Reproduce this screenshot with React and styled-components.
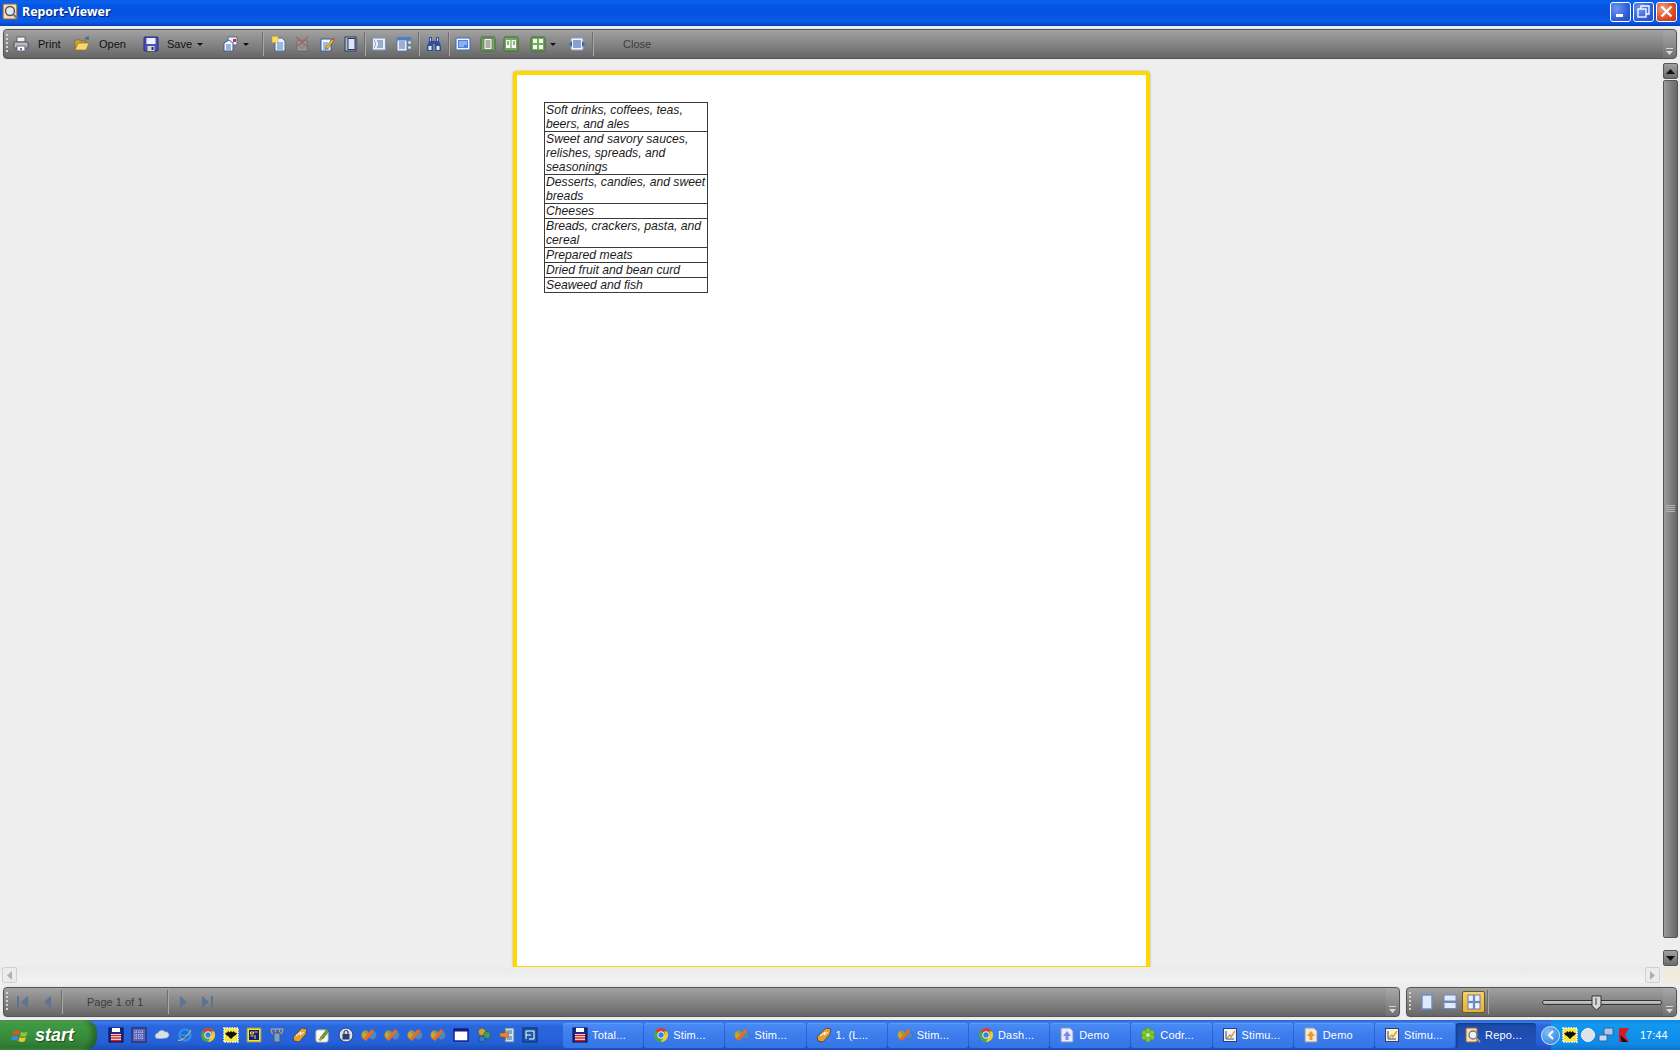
import React from 'react';
import styled, { createGlobalStyle } from 'styled-components';

const Global = createGlobalStyle`
  html, body { margin: 0; padding: 0; background: #eeeeee; overflow: hidden; }
  * { box-sizing: border-box; }
`;

const Screen = styled.div`
  width: 1680px;
  height: 1050px;
  display: flex;
  flex-direction: column;
  font-family: "Liberation Sans", Arial, sans-serif;
  background: #eeeeee;
  overflow: hidden;
`;

const TitleBar = styled.div`
  height: 26px;
  flex: none;
  display: flex;
  align-items: center;
  padding: 0 3px 2px 2px;
  background: linear-gradient(180deg, #0a5be0 0%, #0a62f0 8%, #0458e6 20%, #0550dc 55%, #0a5cec 85%, #0347c9 100%);
  border-bottom: 1px solid #0a3fb0;
`;

const TitleText = styled.span`
  margin-left: 3px;
  color: #fff;
  font: bold 12.4px "Noto Sans", "Liberation Sans", sans-serif;
  text-shadow: 1px 1px 0 #06246e;
`;

const WinButtons = styled.div`
  margin-left: auto;
  display: flex;
  gap: 2px;
`;

const WinButton = styled.div`
  width: 21px;
  height: 20px;
  border: 1px solid #fff;
  border-radius: 3px;
  display: flex;
  align-items: center;
  justify-content: center;
  background: ${p => p.$close
    ? 'radial-gradient(circle at 30% 30%, #f0a080, #dc4a20 60%, #c03410)'
    : 'radial-gradient(circle at 30% 30%, #6f97ee, #2f5fdc 60%, #2048bb)'};
`;

const Toolbar = styled.div`
  height: 30px;
  flex: ${p => p.$grow ? '1' : 'none'};
  width: ${p => p.$w ? p.$w + 'px' : 'auto'};
  display: flex;
  align-items: center;
  border: 1px solid #555;
  border-radius: 4px;
  background: linear-gradient(180deg, #a2a2a2 0%, #939393 25%, #7c7c7c 65%, #656565 100%);
  box-shadow: 0 0 1px #aaa;
  font-size: 11px;
  color: #111;
  overflow: hidden;
`;

const TopRow = styled.div`
  flex: none;
  padding: 3px 3px 4px 3px;
`;

const Grip = styled.div`
  width: 2px;
  height: 20px;
  margin: 0 ${p => p.$after}px 0 2px;
  flex: none;
  background: repeating-linear-gradient(180deg, #d5d5c5 0 2px, transparent 2px 4px);
`;

const Slot = styled.div`
  width: ${p => p.$w}px;
  margin-left: ${p => p.$ml || 0}px;
  height: 100%;
  flex: none;
  display: flex;
  align-items: center;
  justify-content: ${p => p.$start ? 'flex-start' : 'center'};
  gap: ${p => p.$gap || 0}px;
`;

const Sep = styled.div`
  width: 1px;
  height: 24px;
  flex: none;
  margin-left: ${p => p.$ml || 0}px;
  background: #a8a8a8;
  box-shadow: -1px 0 0 #6e6e6e;
`;

const Caret = styled.span`
  width: 0;
  height: 0;
  flex: none;
  margin-left: ${p => p.$ml || 0}px;
  border-left: 3px solid transparent;
  border-right: 3px solid transparent;
  border-top: 3px solid #111;
`;

const Dim = styled.span`
  color: #3c3c3c;
  margin-left: ${p => p.$ml || 0}px;
  white-space: nowrap;
`;

const EndCap = styled.div`
  margin-left: auto;
  width: 13px;
  height: 100%;
  flex: none;
  display: flex;
  align-items: flex-end;
  justify-content: center;
  padding-bottom: 3px;
  background: rgba(255, 255, 255, 0.07);
`;

const Middle = styled.div`
  flex: 1;
  min-height: 0;
  display: flex;
  padding-right: 2px;
`;

const Viewport = styled.div`
  flex: 1;
  min-width: 0;
  overflow: hidden;
  display: flex;
  justify-content: center;
  align-items: flex-start;
  padding-top: 8px;
`;

const Page = styled.div`
  width: 637px;
  height: 899px;
  flex: none;
  background: #fff;
  border: 4px solid #ffd800;
  border-radius: 4px;
  box-shadow: 0 0 2px #9aa0c0;
  padding: 27px 0 0 27px;
`;

const Table = styled.div`
  width: 164px;
  border: 1px solid #3a3a3a;
  border-bottom: 0;
  font: italic 12.2px/14px "Liberation Sans", Arial, sans-serif;
  color: #1c1c1c;
`;

const Cell = styled.div`
  border-bottom: 1px solid #3a3a3a;
  padding-left: 1px;
  white-space: nowrap;
`;

const VScroll = styled.div`
  width: 15px;
  flex: none;
  display: flex;
  flex-direction: column;
  gap: 1px;
  margin-bottom: 1px;
`;

const ScrollBtn = styled.div`
  height: 16px;
  flex: none;
  margin-top: ${p => p.$auto ? 'auto' : '0'};
  border: 1px solid #555;
  border-radius: 2px;
  display: flex;
  align-items: center;
  justify-content: center;
  background: linear-gradient(180deg, #a0a0a0, #6c6c6c);
`;

const Thumb = styled.div`
  height: 858px;
  flex: none;
  border: 1px solid #555;
  border-radius: 2px;
  display: flex;
  align-items: center;
  justify-content: center;
  background: linear-gradient(90deg, #9c9c9c, #7a7a7a 60%, #686868);
`;

const Ridges = styled.div`
  width: 9px;
  height: 8px;
  background: repeating-linear-gradient(180deg, #b4b4b4 0 1px, transparent 1px 2px);
`;

const HScroll = styled.div`
  height: 16px;
  flex: none;
  display: flex;
  align-items: center;
  background: linear-gradient(180deg, #eaeaea, #f3f3f3);
`;

const HBtn = styled.div`
  width: 15px;
  height: 16px;
  flex: none;
  margin: ${p => p.$m};
  border: 1px solid #d0d0d0;
  border-radius: 2px;
  background: #ececec;
  display: flex;
  align-items: center;
  justify-content: center;
`;

const Corner = styled.div`
  width: 18px;
  height: 16px;
  flex: none;
  background: #efebdd;
`;

const BottomRow = styled.div`
  flex: none;
  display: flex;
  gap: 6px;
  padding: 4px 3px 3px 3px;
`;

const ViewBtn = styled.div`
  width: ${p => p.$w}px;
  height: 22px;
  flex: none;
  display: flex;
  align-items: center;
  justify-content: center;
  border: ${p => p.$on ? '1px solid #6c5a20' : '0'};
  border-radius: 2px;
  background: ${p => p.$on ? 'linear-gradient(180deg, #f6d26a, #e8b030)' : 'none'};
`;

const Slider = styled.div`
  position: relative;
  width: 120px;
  height: 5px;
  margin-left: 53px;
  flex: none;
  border: 1px solid #333;
  border-radius: 3px;
  background: linear-gradient(180deg, #c8c8c8, #a8a8a8);
`;

const SliderThumb = styled.svg`
  position: absolute;
  left: 48px;
  top: -6px;
`;

const Taskbar = styled.div`
  height: 30px;
  flex: none;
  display: flex;
  align-items: stretch;
  background: linear-gradient(180deg, #2a62cc 0%, #3c7ce8 8%, #2a66dc 20%, #2560d8 75%, #1c4cb8 100%);
`;

const Start = styled.div`
  width: 97px;
  flex: none;
  display: flex;
  align-items: center;
  padding-left: 11px;
  gap: 5px;
  border-radius: 0 12px 12px 0;
  background: linear-gradient(180deg, #5fa860 0%, #3f9a42 15%, #388a3b 60%, #2f7a32 90%, #47914a 100%);
  box-shadow: inset -5px 0 5px rgba(20, 60, 20, 0.45);
`;

const StartText = styled.span`
  color: #fff;
  font: italic bold 18px "Liberation Sans", Arial, sans-serif;
  text-shadow: 1px 1px 1px #1a4a1c;
`;

const Quick = styled.div`
  width: 466px;
  flex: none;
  display: flex;
  align-items: center;
  padding-left: 11px;
  gap: 7px;
`;

const Tasks = styled.div`
  flex: none;
  display: flex;
  align-items: center;
  gap: 1px;
`;

const Task = styled.div`
  width: 80.2px;
  height: 25px;
  flex: none;
  display: flex;
  align-items: center;
  gap: 4px;
  padding-left: 9px;
  border-radius: 3px;
  color: #fff;
  font-size: 11px;
  letter-spacing: 0.2px;
  white-space: nowrap;
  background: ${p => p.$active
    ? 'linear-gradient(180deg, #1c4aa8, #2052bc)'
    : 'linear-gradient(180deg, #4a8cf6, #3c7cec 50%, #3675e6)'};
  box-shadow: ${p => p.$active ? 'inset 1px 1px 2px #123a88' : 'inset 0 1px 0 #5c9cfc'};
`;

const Tray = styled.div`
  margin-left: auto;
  width: 129px;
  flex: none;
  display: flex;
  align-items: center;
  gap: 2px;
  background: linear-gradient(180deg, #1488e4, #1298ee 15%, #0f8ae6 80%, #0d74d0);
  color: #fff;
  font-size: 11px;
`;

const Chevron = styled.div`
  width: 19px;
  height: 19px;
  margin-left: -10px;
  flex: none;
  border-radius: 50%;
  border: 1px solid #cfe6fb;
  background: radial-gradient(circle at 35% 30%, #7cc0f8, #2a78dc);
  display: flex;
  align-items: center;
  justify-content: center;
`;

const Clock = styled.span`
  margin-left: 6px;
`;

const Svg = ({ s = 16, children }) => (
  <svg width={s} height={s} viewBox="0 0 16 16" style={{ flex: 'none' }}>{children}</svg>
);

const AppIcon = () => (
  <Svg s={17}>
    <rect x="1" y="1" width="13" height="14" rx="1" fill="#f3dfc0" stroke="#a2652a" />
    <circle cx="7.5" cy="7.5" r="4.2" fill="#dfe9f4" stroke="#555" strokeWidth="1.4" />
    <path d="M10.5 10.5l4 4" stroke="#777" strokeWidth="2" />
  </Svg>
);
const Printer = () => (
  <Svg>
    <rect x="4" y="1" width="8" height="5" fill="#f4f4f4" stroke="#666" />
    <rect x="1" y="6" width="14" height="6" rx="1" fill="#b6bcc6" stroke="#4a4f58" />
    <rect x="4" y="10" width="8" height="5" fill="#fff" stroke="#666" />
    <rect x="7" y="12" width="2" height="2" fill="#3a78d8" />
  </Svg>
);
const Folder = () => (
  <Svg>
    <path d="M1 4h5l1 1h5v2H4L1 14z" fill="#d9a72e" stroke="#7a5a14" strokeWidth=".6" />
    <path d="M4 7h11l-3 7H1z" fill="#f6d873" stroke="#8c6a1c" strokeWidth=".6" />
    <path d="M11 3l3-2v3" fill="none" stroke="#3f5f9c" strokeWidth="1.2" />
  </Svg>
);
const Floppy = () => (
  <Svg>
    <rect x="1" y="1" width="14" height="14" rx="1" fill="#4b4fb8" stroke="#2a2c78" />
    <rect x="3.5" y="2" width="9" height="6" fill="#eef0fa" />
    <rect x="4.5" y="10" width="7" height="5" fill="#d8d8d8" />
    <rect x="8.5" y="11" width="2" height="3" fill="#333" />
  </Svg>
);
const SendDoc = () => (
  <Svg>
    <path d="M5 1h9v8H5z" fill="#eef3fb" stroke="#526a94" />
    <rect x="10" y="3" width="3" height="3" fill="#c8322c" />
    <path d="M1 7l5-3 4 3v8H1z" fill="#f4f8ff" stroke="#3e5a8c" />
    <path d="M3 9h5M3 11h5M3 13h5" stroke="#3a6ac4" />
  </Svg>
);
const DocStar = () => (
  <Svg>
    <path d="M4 2h7l3 3v10H4z" fill="#e8f0fb" stroke="#4c6c9c" />
    <path d="M6 7h6M6 9h6M6 11h6M6 13h6" stroke="#4e80c8" />
    <rect x="1" y="0.500" width="6" height="6" fill="#f6df62" stroke="#d0a820" strokeDasharray="1 1" />
  </Svg>
);
const DocX = () => (
  <Svg>
    <g opacity=".7">
      <path d="M3 5h10v10H3z" fill="#aab0b8" stroke="#666" />
      <path d="M5 8h6M5 10h6M5 12h6" stroke="#777" />
      <path d="M2 1l12 10M14 1L2 11" stroke="#b05a4c" strokeWidth="1.6" />
    </g>
  </Svg>
);
const DocPen = () => (
  <Svg>
    <path d="M2 3h10v12H2z" fill="#f2f6fc" stroke="#2f5c9c" />
    <path d="M4 7h5M4 9h4M4 11h3M4 13h6" stroke="#4e80c8" />
    <path d="M7 11l6-8 2 1.500-6 8-2.400 1z" fill="#e8b83c" stroke="#7a5814" strokeWidth=".6" />
    <path d="M13 3l1-1.500 1.800 1.300-1 1.500z" fill="#d8386c" />
  </Svg>
);
const Pages = () => (
  <Svg>
    <rect x="2" y="1" width="11" height="14" fill="#aab8cf" stroke="#2c3c5c" />
    <rect x="5" y="2.500" width="7" height="11" fill="#dfe6f1" stroke="#2c3c5c" />
    <rect x="13" y="3" width="1.500" height="10" fill="#55688c" />
  </Svg>
);
const Outline = () => (
  <Svg>
    <rect x="1.500" y="2" width="13" height="12" rx="1" fill="#e8eef8" stroke="#7a90b8" />
    <path d="M6 5h6M7 7h5M7 9h5M6 11h6" stroke="#4e6a9c" />
    <path d="M3 5h1M4 7h1M4 9h1M3 11h1" stroke="#4e6a9c" />
  </Svg>
);
const Thumbs = () => (
  <Svg>
    <rect x="1" y="1" width="14" height="3" fill="#4a7cd8" />
    <rect x="1" y="4" width="10" height="11" fill="#eef3fb" stroke="#5a78a8" />
    <path d="M3 6h6M3 8h6M3 10h6M3 12h6" stroke="#4e6a9c" />
    <path d="M12 5h3v3h-3zM12 10h3v3h-3z" fill="#e8eef8" stroke="#5a78a8" strokeWidth=".6" />
  </Svg>
);
const Binoculars = () => (
  <Svg>
    <path d="M3 1h3v4h4V1h3v4l2 5v5H9V8H7v7H1v-5l2-5z" fill="#2f4f9c" />
    <path d="M2.500 10h3v4h-3zM10.500 10h3v4h-3z" fill="#dfe8f8" />
    <path d="M4 2h1v3H4zM11 2h1v3h-1z" fill="#c9d8f4" />
  </Svg>
);
const PageBlue = () => (
  <Svg>
    <rect x="1" y="2" width="14" height="12" rx="1" fill="#eef3fb" stroke="#3a68b8" />
    <rect x="3" y="4" width="10" height="8" fill="#4c80dc" />
    <path d="M4 6h8M4 8h8M4 10h5" stroke="#cfe0fa" />
  </Svg>
);
const GreenFrame = ({ children }) => (
  <Svg>
    <rect x="1" y="1" width="14" height="14" rx="1.500" fill="#77a860" stroke="#3c6a34" />
    {children}
  </Svg>
);
const GreenOne = () => (
  <GreenFrame><rect x="4" y="2.500" width="8" height="11" fill="#f4f7f0" stroke="#4a5c44" strokeWidth=".6" /><path d="M5.500 5h5M5.500 7h5M5.500 9h5M5.500 11h5" stroke="#666" /></GreenFrame>
);
const GreenTwo = () => (
  <GreenFrame><rect x="3" y="4" width="4.400" height="8" fill="#f4f7f0" /><rect x="8.600" y="4" width="4.400" height="8" fill="#f4f7f0" /><path d="M4 6h2M4 8h2M10 6h2M10 8h2" stroke="#555" /></GreenFrame>
);
const GreenFour = () => (
  <GreenFrame>
    <rect x="3" y="3" width="4" height="4" fill="#f4f7f0" /><rect x="9" y="3" width="4" height="4" fill="#f4f7f0" />
    <rect x="3" y="9" width="4" height="4" fill="#f4f7f0" /><rect x="9" y="9" width="4" height="4" fill="#f4f7f0" />
  </GreenFrame>
);
const PageWidth = () => (
  <Svg>
    <rect x="2" y="2" width="12" height="12" rx="1" fill="#f0f4fb" stroke="#8aa0c4" />
    <path d="M4 5h8M4 7h8M4 9h8M4 11h8" stroke="#1f4f9c" />
    <path d="M0 8l3-3v6zM16 8l-3-3v6z" fill="#2a68c8" />
  </Svg>
);
const NavFirst = ({ flip }) => (
  <Svg>
    <g fill="#5f7394" transform={flip ? 'matrix(-1 0 0 1 16 0)' : undefined}>
      <rect x="2" y="2" width="2" height="12" />
      <path d="M13 2v12L6 8z" />
    </g>
  </Svg>
);
const NavPrev = ({ flip }) => (
  <Svg>
    <path d={flip ? 'M5 2v12l7-6z' : 'M11 2v12L4 8z'} fill="#5f7394" />
  </Svg>
);
const ViewSingle = () => (
  <Svg><rect x="3" y="1" width="10" height="14" fill="#dfe9f8" stroke="#6a8cc8" strokeWidth="1.400" /></Svg>
);
const ViewStack = () => (
  <Svg>
    <rect x="2" y="1" width="12" height="6" fill="#dfe9f8" stroke="#6a8cc8" />
    <rect x="2" y="8.500" width="12" height="6" fill="#dfe9f8" stroke="#6a8cc8" />
  </Svg>
);
const ViewGrid = () => (
  <Svg>
    <rect x="2" y="1" width="5.400" height="6.400" fill="#eef3fb" stroke="#5a80c0" />
    <rect x="8.600" y="1" width="5.400" height="6.400" fill="#eef3fb" stroke="#5a80c0" />
    <rect x="2" y="8.600" width="5.400" height="6.400" fill="#eef3fb" stroke="#5a80c0" />
    <rect x="8.600" y="8.600" width="5.400" height="6.400" fill="#eef3fb" stroke="#5a80c0" />
  </Svg>
);
const Windows = () => (
  <Svg s={19}>
    <path d="M2 4.500c2-1 3.500-1 5.500 0L6.500 8c-2-1-3.500-1-5.500 0z" fill="#e2512c" />
    <path d="M8.500 4.800c2 1 3.500 1 5.500 0L13 8.300c-2 1-3.500 1-5.500 0z" fill="#8cc63e" />
    <path d="M1 9c2-1 3.500-1 5.200 0l-1 3.500c-2-1-3.300-1-5.200 0z" fill="#3a8de0" />
    <path d="M7.200 9.200c2 1 3.500 1 5.500 0l-1 3.500c-2 1-3.500 1-5.500 0z" fill="#f4c52c" />
  </Svg>
);
const Disk = () => (
  <Svg>
    <rect x="1" y="1" width="14" height="14" fill="#1c2a8c" stroke="#0c0c3c" />
    <rect x="4" y="1" width="8" height="4" fill="#fff" />
    <rect x="3" y="7" width="10" height="7" fill="#fff" />
    <path d="M3 8.500h10M3 11h10M3 13.500h10" stroke="#d81c1c" strokeWidth="1.300" />
  </Svg>
);
const Matrix = () => (
  <Svg><rect x="1" y="1" width="14" height="14" fill="#5a62b8" stroke="#1c1c50" /><path d="M5 3v10M8 3v10M11 3v10M3 5h10M3 8h10M3 11h10" stroke="#c4cbef" strokeDasharray="1 1" /></Svg>
);
const Cloud = () => (
  <Svg><path d="M2 11a3 3 0 0 1 2-5 4 4 0 0 1 7-1 3 3 0 0 1 3 5c-1 1.500-10 2-12 1z" fill="#d9dfe6" stroke="#aab2bd" strokeWidth=".6" /></Svg>
);
const IE = () => (
  <Svg>
    <circle cx="8" cy="8" r="5.500" fill="none" stroke="#2d8fe4" strokeWidth="2.400" />
    <path d="M3 8.200h10" stroke="#2d8fe4" strokeWidth="1.800" />
    <path d="M1 13c2 2 9-3 13-10" fill="none" stroke="#f0c84c" strokeWidth="1" />
  </Svg>
);
const Chrome = () => (
  <Svg>
    <circle cx="8" cy="8" r="7" fill="#4aa84a" />
    <path d="M8 1a7 7 0 0 1 6.100 3.500H8a3.500 3.500 0 0 0-3 1.800L2.400 3.800A7 7 0 0 1 8 1z" fill="#d8402e" />
    <path d="M14.100 4.500A7 7 0 0 1 8 15l3-5.500a3.500 3.500 0 0 0 0-5z" fill="#f4c92c" />
    <circle cx="8" cy="8" r="3.300" fill="#3c7ee0" stroke="#f4f4f4" />
  </Svg>
);
const Bat = () => (
  <Svg>
    <rect x="1" y="1" width="14" height="14" fill="#f6e93c" stroke="#fff" strokeWidth="1.500" strokeDasharray="1.500 1" />
    <path d="M2 6c2 0 3-1 3-2l2 1.500V4l1 1 1-1v1.500L11 4c0 1 1 2 3 2-1 2-2 3-3 3l-3 3-3-3C4 9 3 8 2 6z" fill="#111" />
  </Svg>
);
const Game = () => (
  <Svg>
    <rect x="1" y="1" width="14" height="14" fill="#f4ec10" stroke="#888" />
    <rect x="3" y="3" width="10" height="10" fill="#111a90" />
    <path d="M4.500 5h3v2h-3zM8.500 5h3M4.500 9h3M9 8v4" stroke="#f4ec10" fill="none" />
  </Svg>
);
const Castle = () => (
  <Svg>
    <path d="M2 2c1 3 0 4 2 5M6 2c1 3 0 3 1 5M10 2c1 3 0 3 2 5M14 2c0 3-1 4-2 5" stroke="#d89a4c" fill="none" strokeWidth="1.300" />
    <path d="M5 6h6v9H5z" fill="#7aa0c4" stroke="#44597a" />
    <path d="M2 2h12" stroke="#8a9cc8" strokeWidth="1.500" />
  </Svg>
);
const Lightning = () => (
  <Svg>
    <path d="M1 10l9-9 5 1-1 5-7 8-5-1z" fill="#e8a030" stroke="#333" strokeWidth=".7" />
    <path d="M4 9l5-4-1 3 4-3" stroke="#fff" fill="none" />
  </Svg>
);
const Paint = () => (
  <Svg>
    <rect x="1" y="3" width="12" height="12" rx="2" fill="#fbfbf4" stroke="#c8c8b8" />
    <path d="M5 11l7-9 2 2-6 8z" fill="#6aa03c" stroke="#3c5c24" strokeWidth=".5" />
    <path d="M3 13l2-2 2 1-1 2z" fill="#e0882c" />
  </Svg>
);
const Lock = () => (
  <Svg>
    <circle cx="8" cy="8" r="7" fill="#d8e0ef" stroke="#2a3a68" />
    <rect x="4.500" y="7" width="7" height="5.500" fill="#2c3c6c" />
    <path d="M6 7V5.500a2 2 0 0 1 4 0V7" fill="none" stroke="#2c3c6c" strokeWidth="1.200" />
  </Svg>
);
const Stimul = () => (
  <Svg>
    <ellipse cx="4.500" cy="8" rx="4" ry="4.500" fill="#c8a630" stroke="#6c7a8c" strokeWidth=".6" />
    <ellipse cx="11.500" cy="8" rx="4" ry="4.500" fill="#4a88c8" stroke="#4a6c9c" strokeWidth=".6" />
    <path d="M11 2l2.500 2L5 14l-2.500-2z" fill="#ea6a24" />
    <path d="M3 5l2-1.500L8 7 6.500 8.500z" fill="#8a9a5c" />
  </Svg>
);
const WindowIcon = () => (
  <Svg><rect x="1" y="2" width="14" height="12" fill="#fff" stroke="#101c80" strokeWidth="1.400" /><rect x="1" y="2" width="14" height="2.500" fill="#101c80" /></Svg>
);
const Gears = () => (
  <Svg>
    <circle cx="6" cy="5" r="3.500" fill="#d8a030" stroke="#7a5a14" strokeDasharray="1.500 .8" />
    <circle cx="11" cy="8" r="3.500" fill="#3aa060" stroke="#1c5c34" strokeDasharray="1.500 .8" />
    <circle cx="6" cy="12" r="3" fill="#3c78c8" stroke="#1c3c78" strokeDasharray="1.500 .8" />
  </Svg>
);
const ArrowDoc = () => (
  <Svg>
    <rect x="6" y="1" width="9" height="14" fill="#cfe0ef" stroke="#4a78a0" />
    <path d="M8 4h5M8 6h5M8 10h5M8 12h5" stroke="#3c6c98" />
    <path d="M1 6h5V3l4 5-4 5v-3H1z" fill="#e8882c" stroke="#8c4c14" strokeWidth=".5" />
  </Svg>
);
const BlueBox = () => (
  <Svg>
    <rect x="1" y="1" width="14" height="14" fill="#1a5aa8" stroke="#0c2c68" />
    <path d="M4 4h8v8H7M4 4v8M4 8h5" stroke="#fff" fill="none" />
  </Svg>
);
const Flower = () => (
  <Svg>
    {[0, 60, 120, 180, 240, 300].map(a => (
      <circle key={a} cx="8" cy="3.800" r="2.800" fill="#7cc83c" stroke="#4c8c1c" strokeWidth=".5" transform={`rotate(${a} 8 8)`} />
    ))}
    <circle cx="8" cy="8" r="2" fill="#d8f08c" />
  </Svg>
);
const UpDoc = ({ tint = '#e8ecfc', arrow = '#7a8ce8' }) => (
  <Svg>
    <path d="M2 1h9l3 3v11H2z" fill={tint} stroke="#8a94b8" />
    <path d="M8 4l4 5H9.500v4h-3V9H4z" fill={arrow} />
  </Svg>
);
const Chart = ({ tint = '#f0f2fb' }) => (
  <Svg>
    <rect x="1.500" y="1.500" width="13" height="13" fill={tint} stroke="#333a78" />
    <path d="M4 4v8h8" stroke="#2a4a9c" fill="none" />
    <path d="M5 11l3-3 1 2 4-6" stroke="#d8a030" strokeWidth="1.400" fill="none" />
  </Svg>
);
const ReportIcon = () => (
  <Svg>
    <rect x="1" y="1" width="11" height="14" rx="1" fill="#f3dfc0" stroke="#a2652a" />
    <circle cx="8" cy="8" r="4" fill="#eef3f8" stroke="#777" strokeWidth="1.400" />
    <path d="M11 11l4 4" stroke="#999" strokeWidth="1.800" />
  </Svg>
);
const Circle = () => (
  <Svg><circle cx="8" cy="8" r="6.500" fill="#dfe3e8" stroke="#f4f4f4" /></Svg>
);
const Network = () => (
  <Svg>
    <rect x="6" y="1" width="9" height="7" fill="#a8c8ec" stroke="#3a64a0" />
    <rect x="1" y="8" width="8" height="6" fill="#c8daf0" stroke="#3a64a0" />
  </Svg>
);
const Kaspersky = () => (
  <Svg>
    <path d="M3 1h10l-4 7 4 7H3z" fill="#d81c20" />
    <path d="M4 8l8 7H6z" fill="#111" />
  </Svg>
);
const MiniDown = () => (
  <svg width="9" height="7" viewBox="0 0 9 7" style={{ flex: 'none' }}>
    <path d="M1 .5h7" stroke="#d8d8d8" />
    <path d="M1 3h7L4.500 7z" fill="#d8d8d8" />
  </svg>
);

const rows = [
  ['Soft drinks, coffees, teas,', 'beers, and ales'],
  ['Sweet and savory sauces,', 'relishes, spreads, and', 'seasonings'],
  ['Desserts, candies, and sweet', 'breads'],
  ['Cheeses'],
  ['Breads, crackers, pasta, and', 'cereal'],
  ['Prepared meats'],
  ['Dried fruit and bean curd'],
  ['Seaweed and fish'],
];

const quick = [Disk, Matrix, Cloud, IE, Chrome, Bat, Game, Castle, Lightning, Paint, Lock, Stimul, Stimul, Stimul, Stimul, WindowIcon, Gears, ArrowDoc, BlueBox];

const tasks = [
  [Disk, 'Total...'],
  [Chrome, 'Stim...'],
  [Stimul, 'Stim...'],
  [Lightning, '1.  (L...'],
  [Stimul, 'Stim...'],
  [Chrome, 'Dash...'],
  [UpDoc, 'Demo'],
  [Flower, 'Codr...'],
  [Chart, 'Stimu...'],
  [() => <UpDoc tint="#f4e8d0" arrow="#e89a2c" />, 'Demo'],
  [() => <Chart tint="#f8f0d0" />, 'Stimu...'],
  [ReportIcon, 'Repo...', true],
];

export default function App() {
  return (
    <Screen>
      <Global />
      <TitleBar>
        <AppIcon />
        <TitleText>Report-Viewer</TitleText>
        <WinButtons>
          <WinButton>
            <svg width="11" height="11" viewBox="0 0 11 11"><rect x="1" y="8" width="7" height="3" fill="#fff" /></svg>
          </WinButton>
          <WinButton>
            <svg width="13" height="13" viewBox="0 0 13 13" fill="none" stroke="#fff" strokeWidth="1.300"><rect x="1" y="4" width="8" height="8" /><path d="M4 4V1h8v8H9" /></svg>
          </WinButton>
          <WinButton $close>
            <svg width="13" height="13" viewBox="0 0 13 13" stroke="#fff" strokeWidth="2.400"><path d="M1.500 1.500l10 10M11.500 1.500l-10 10" /></svg>
          </WinButton>
        </WinButtons>
      </TitleBar>

      <TopRow>
        <Toolbar>
          <Grip $after={5} />
          <Slot $w={61} $start $gap={9}><Printer />Print</Slot>
          <Slot $w={69} $start $gap={9}><Folder />Open</Slot>
          <Slot $w={80} $start $gap={8}><Floppy />Save<Caret $ml={-3} /></Slot>
          <Slot $w={36} $start $gap={4}><SendDoc /><Caret /></Slot>
          <Sep $ml={4} />
          <Slot $w={30}><DocStar /></Slot>
          <Slot $w={16}><DocX /></Slot>
          <Slot $w={34}><DocPen /></Slot>
          <Slot $w={14}><Pages /></Slot>
          <Sep $ml={7} />
          <Slot $w={26}><Outline /></Slot>
          <Slot $w={24}><Thumbs /></Slot>
          <Sep $ml={3} />
          <Slot $w={28}><Binoculars /></Slot>
          <Sep $ml={1} />
          <Slot $w={26}><PageBlue /></Slot>
          <Slot $w={24}><GreenOne /></Slot>
          <Slot $w={22}><GreenTwo /></Slot>
          <Slot $w={30} $ml={8} $start $gap={4}><GreenFour /><Caret /></Slot>
          <Slot $w={33}><PageWidth /></Slot>
          <Sep />
          <Dim $ml={29}>Close</Dim>
          <EndCap><MiniDown /></EndCap>
        </Toolbar>
      </TopRow>

      <Middle>
        <Viewport>
          <Page>
            <Table>
              {rows.map((lines, i) => (
                <Cell key={i}>
                  {lines.map((l, j) => <div key={j}>{l}</div>)}
                </Cell>
              ))}
            </Table>
          </Page>
        </Viewport>
        <VScroll>
          <ScrollBtn>
            <svg width="9" height="5" viewBox="0 0 9 5"><path d="M4.500 0L9 5H0z" fill="#111" /></svg>
          </ScrollBtn>
          <Thumb><Ridges /></Thumb>
          <ScrollBtn $auto>
            <svg width="9" height="5" viewBox="0 0 9 5"><path d="M0 0h9L4.500 5z" fill="#111" /></svg>
          </ScrollBtn>
        </VScroll>
      </Middle>

      <HScroll>
        <HBtn $m="0 auto 0 2px">
          <svg width="5" height="9" viewBox="0 0 5 9"><path d="M5 0v9L0 4.500z" fill="#b0b0b0" /></svg>
        </HBtn>
        <HBtn $m="0 2px 0 0">
          <svg width="5" height="9" viewBox="0 0 5 9"><path d="M0 0v9l5-4.500z" fill="#b0b0b0" /></svg>
        </HBtn>
        <Corner />
      </HScroll>

      <BottomRow>
        <Toolbar $grow>
          <Grip $after={2} />
          <Slot $w={25}><NavFirst /></Slot>
          <Slot $w={25}><NavPrev /></Slot>
          <Sep $ml={2} />
          <Dim $ml={24}>Page 1 of 1</Dim>
          <Sep $ml={25} />
          <Slot $w={28}><NavPrev flip /></Slot>
          <Slot $w={19}><NavFirst flip /></Slot>
          <EndCap><MiniDown /></EndCap>
        </Toolbar>
        <Toolbar $w={271}>
          <Grip $after={4} />
          <ViewBtn $w={23}><ViewSingle /></ViewBtn>
          <ViewBtn $w={24}><ViewStack /></ViewBtn>
          <ViewBtn $w={23} $on><ViewGrid /></ViewBtn>
          <Sep $ml={3} />
          <Slider>
            <SliderThumb width="11" height="16" viewBox="0 0 11 16">
              <path d="M1 1h9v10l-4.500 4L1 11z" fill="#d8d8d8" stroke="#333" />
              <path d="M5 3v7" stroke="#888" strokeWidth="2" />
            </SliderThumb>
          </Slider>
          <EndCap><MiniDown /></EndCap>
        </Toolbar>
      </BottomRow>

      <Taskbar>
        <Start>
          <Windows />
          <StartText>start</StartText>
        </Start>
        <Quick>
          {quick.map((Icon, i) => <Icon key={i} />)}
        </Quick>
        <Tasks>
          {tasks.map(([Icon, label, active], i) => (
            <Task key={i} $active={active}>
              <Icon />
              {label}
            </Task>
          ))}
        </Tasks>
        <Tray>
          <Chevron>
            <svg width="8" height="10" viewBox="0 0 8 10" fill="none" stroke="#fff" strokeWidth="2"><path d="M6 1L2 5l4 4" /></svg>
          </Chevron>
          <Bat />
          <Circle />
          <Network />
          <Kaspersky />
          <Clock>17:44</Clock>
        </Tray>
      </Taskbar>
    </Screen>
  );
}
